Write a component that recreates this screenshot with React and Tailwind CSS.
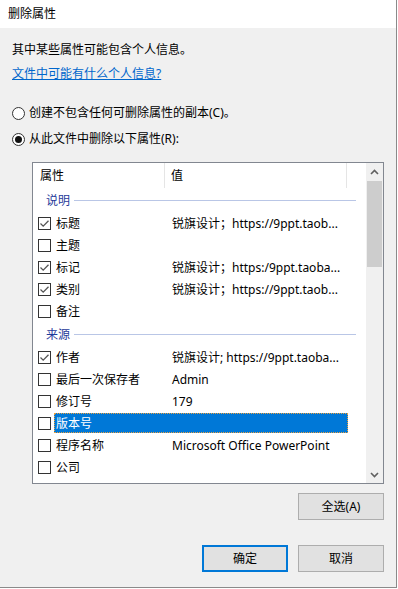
import React from "react";

const FONT = { fontFamily: '"Noto Sans", "Noto Sans CJK SC", sans-serif' };

function Check({ checked }) {
  return (
    <div className="w-[13px] h-[13px] border border-[#333333] bg-white flex items-center justify-center shrink-0">
      {checked && (
        <svg width="11" height="11" viewBox="0 0 11 11">
          <path d="M1.5 5.5 L4.2 8.2 L9.5 2.8" fill="none" stroke="#555555" strokeWidth="1.3" />
        </svg>
      )}
    </div>
  );
}

function Radio({ checked }) {
  return (
    <div className="w-[13px] h-[13px] rounded-full border border-[#333333] bg-white flex items-center justify-center shrink-0">
      {checked && <div className="w-[7px] h-[7px] rounded-full bg-[#111111]" />}
    </div>
  );
}

function Group({ label }) {
  return (
    <div className="h-[24px] flex items-center pl-[13px] pr-[10px]">
      <span className="text-[12px] leading-[16px] text-[#1f3a9a] pt-px">{label}</span>
      <div className="flex-1 h-px bg-[#b9c6e6] ml-[4px]" />
    </div>
  );
}

function Row({ checked, label, value, selected }) {
  return (
    <div className="h-[22px] flex items-center pl-[5px]">
      <Check checked={checked} />
      <div
        className={
          "ml-[3px] w-[294px] h-[20px] flex items-center " +
          (selected ? "bg-[#0078d7] text-white outline-1 outline-dotted outline-[#e8a040] -outline-offset-1" : "text-black")
        }
      >
        <span className="w-[118px] pl-[2px] pt-px text-[12px] leading-[16px] whitespace-nowrap">{label}</span>
        <span className="pt-px text-[12px] leading-[16px] whitespace-nowrap">{value}</span>
      </div>
    </div>
  );
}

function Btn({ children, def }) {
  return (
    <div
      className={
        "w-[86px] h-[27px] flex items-center justify-center bg-[#e1e1e1] text-[12px] leading-[16px] text-black " +
        (def ? "border-2 border-[#0078d7]" : "border border-[#adadad]")
      }
    >
      {children}
    </div>
  );
}

export default function App() {
  const v1 = "锐旗设计；https://9ppt.taob...";
  const v2 = "锐旗设计；https:/9ppt.taoba...";
  return (
    <div className="w-[398px] h-[589px] bg-white" style={FONT}>
      <div className="w-[397px] h-[588px] border-r border-b border-[#8a8a8a] bg-[#f0f0f0] flex flex-col">
        <div className="h-[28px] bg-white flex items-center pl-[8px] shrink-0">
          <span className="text-[12px] leading-[16px] text-black">删除属性</span>
        </div>
        <div className="pl-[12px] flex flex-col">
          <div className="mt-[14px] h-[16px] text-[12px] leading-[16px] text-black">其中某些属性可能包含个人信息。</div>
          <div className="mt-[8px] h-[16px] text-[12px] leading-[16px] text-[#0066cc] underline">文件中可能有什么个人信息?</div>
          <div className="mt-[23px] h-[16px] flex items-center">
            <Radio />
            <span className="ml-[4px] text-[12px] leading-[16px] text-black">创建不包含任何可删除属性的副本(C)。</span>
          </div>
          <div className="mt-[10px] h-[16px] flex items-center">
            <Radio checked />
            <span className="ml-[4px] text-[12px] leading-[16px] text-black">从此文件中删除以下属性(R):</span>
          </div>
          <div className="ml-[20px] mt-[15px] w-[352px]">
            <div className="h-[322px] border border-[#828790] bg-white flex">
              <div className="w-[333px] flex flex-col overflow-hidden">
                <div className="h-[25px] flex items-stretch shrink-0">
                  <div className="w-[132px] pl-[7px] pt-px flex items-center border-r border-[#e5e5e5] text-[12px] leading-[16px] text-black">属性</div>
                  <div className="w-[182px] pl-[6px] pt-px flex items-center border-r border-[#e5e5e5] text-[12px] leading-[16px] text-black">值</div>
                </div>
                <Group label="说明" />
                <Row checked label="标题" value={v1} />
                <Row label="主题" value="" />
                <Row checked label="标记" value={v2} />
                <Row checked label="类别" value={v1} />
                <Row label="备注" value="" />
                <Group label="来源" />
                <Row checked label="作者" value="锐旗设计; https://9ppt.taoba..." />
                <Row label="最后一次保存者" value="Admin" />
                <Row label="修订号" value="179" />
                <Row label="版本号" value="" selected />
                <Row label="程序名称" value="Microsoft Office PowerPoint" />
                <Row label="公司" value="" />
              </div>
              <div className="w-[17px] bg-[#f0f0f0] flex flex-col">
                <div className="h-[17px] flex items-center justify-center">
                  <svg width="9" height="6" viewBox="0 0 9 6">
                    <path d="M1 5 L4.5 1.5 L8 5" fill="none" stroke="#606060" strokeWidth="1.6" />
                  </svg>
                </div>
                <div className="h-[86px] mt-px ml-px mr-px bg-[#cdcdcd]" />
                <div className="flex-1" />
                <div className="h-[17px] flex items-center justify-center">
                  <svg width="9" height="6" viewBox="0 0 9 6">
                    <path d="M1 1 L4.5 4.5 L8 1" fill="none" stroke="#606060" strokeWidth="1.6" />
                  </svg>
                </div>
              </div>
            </div>
            <div className="mt-[9px] flex justify-end">
              <Btn>全选(A)</Btn>
            </div>
            <div className="mt-[25px] flex justify-end gap-[10px]">
              <Btn def>确定</Btn>
              <Btn>取消</Btn>
            </div>
          </div>
        </div>
      </div>
    </div>
  );
}
